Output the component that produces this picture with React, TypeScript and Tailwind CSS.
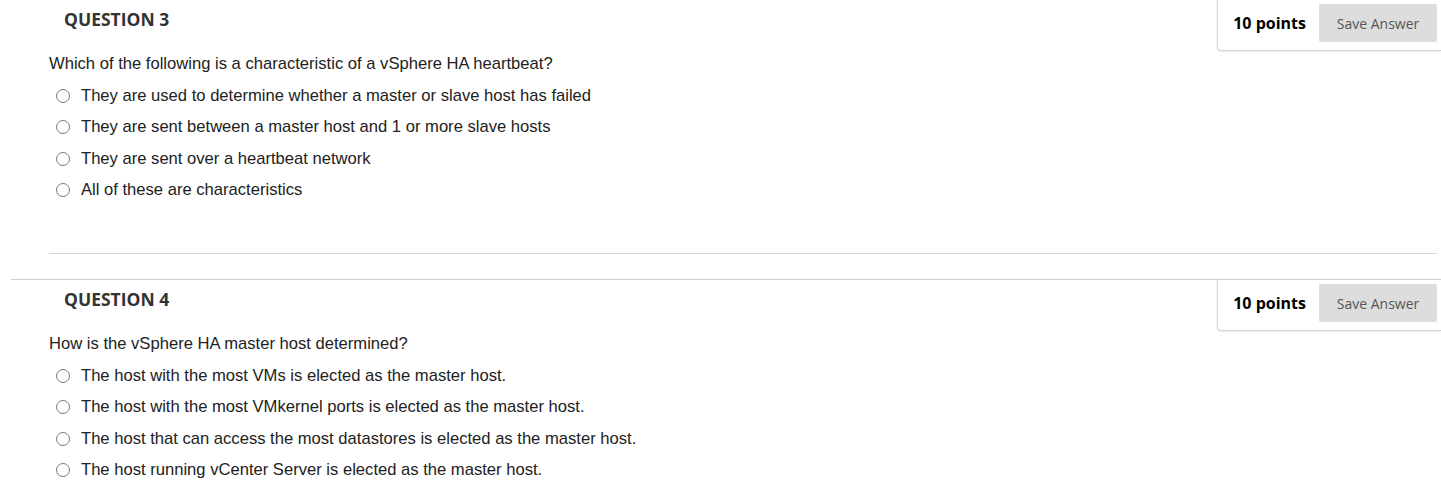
const questions = [
  {
    number: 3,
    text: 'Which of the following is a characteristic of a vSphere HA heartbeat?',
    options: [
      'They are used to determine whether a master or slave host has failed',
      'They are sent between a master host and 1 or more slave hosts',
      'They are sent over a heartbeat network',
      'All of these are characteristics',
    ],
  },
  {
    number: 4,
    text: 'How is the vSphere HA master host determined?',
    options: [
      'The host with the most VMs is elected as the master host.',
      'The host with the most VMkernel ports is elected as the master host.',
      'The host that can access the most datastores is elected as the master host.',
      'The host running vCenter Server is elected as the master host.',
    ],
  },
];

function Question({ q }: { q: (typeof questions)[number] }) {
  return (
    <section className="ml-[11px] border-t border-[#cfcfcf] pb-[25px]">
      <div className="flex items-start justify-between">
        <h2 className="pl-[53px] pt-[7px] text-[17.5px] leading-6 font-bold text-[#333] font-['Open_Sans',sans-serif]">
          QUESTION {q.number}
        </h2>
        <div className="flex items-center gap-[13px] rounded-bl-[4px] border-b border-l border-[#d4d4d4] bg-white pt-1 pb-2 pl-[15px] pr-1 shadow-[0_1px_2px_rgba(0,0,0,0.08)] font-['Open_Sans',sans-serif]">
          <span className="text-[16px] font-bold text-black">10 points</span>
          <button className="h-[38px] w-[118px] rounded-[2px] bg-[#dddddd] text-[14px] text-[#555]">
            Save Answer
          </button>
        </div>
      </div>
      <div className="pl-[38px] pr-1 font-['Liberation_Sans',Arial,sans-serif] text-[16.6px] text-[#222]">
        <p className="mt-[3px] leading-5">{q.text}</p>
        <ul className="mt-[6px]">
          {q.options.map((opt) => (
            <li key={opt} className="flex h-[31.5px] items-center gap-[11px] pl-[7px]">
              <input
                type="radio"
                name={`q${q.number}`}
                className="m-0 h-[14px] w-[14px] shrink-0 appearance-none rounded-full border-[1.5px] border-[#7a7a7a] bg-white"
              />
              <span className="leading-5">{opt}</span>
            </li>
          ))}
        </ul>
        <div className="mt-[47px] h-px bg-[#d6d6d6]" />
      </div>
    </section>
  );
}

export default function App() {
  return (
    <div className="-mt-px min-h-[491px] bg-white">
      {questions.map((q) => (
        <Question key={q.number} q={q} />
      ))}
    </div>
  );
}
